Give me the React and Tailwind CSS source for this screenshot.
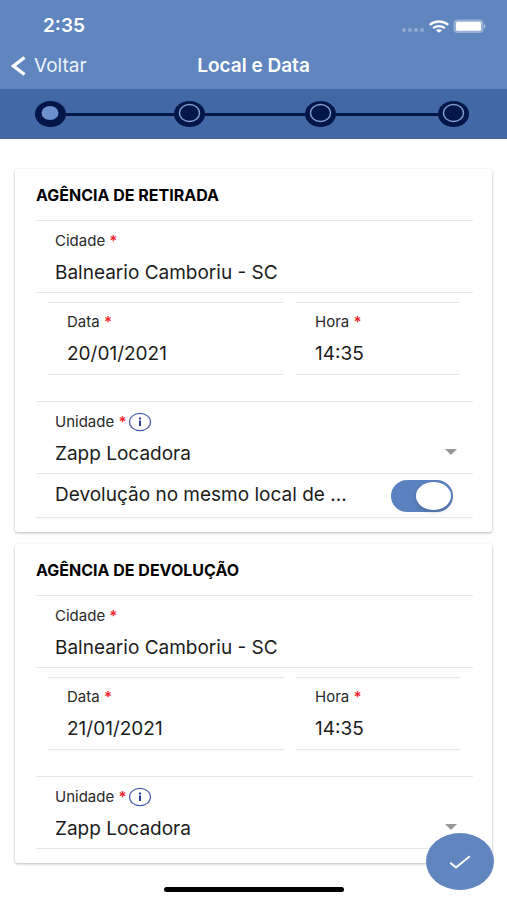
import { useState } from "react";

function StatusBar() {
  return (
    <div className="flex h-[52px] items-center justify-between pl-[43px] pr-[21px]">
      <span className="text-[19px] font-semibold">2:35</span>
      <div className="flex items-center">
        <svg width="24" height="6" viewBox="0 0 24 6" className="mt-2" aria-hidden="true">
          <g fill="#fff" opacity="0.3">
            <circle cx="3" cy="3" r="2" />
            <circle cx="9" cy="3" r="2" />
            <circle cx="15" cy="3" r="2" />
            <circle cx="21" cy="3" r="2" />
          </g>
        </svg>
        <svg width="20" height="13" viewBox="0 0 20 13" className="ml-1" aria-hidden="true">
          <g fill="none" stroke="#fff" strokeWidth="2.4">
            <path d="M.8 4.800C6 .4 14 .4 19.200 4.800" />
            <path d="M4.200 8.200c3.300-2.800 8.300-2.800 11.600 0" />
          </g>
          <path d="M6.800 10.200c1.900-1.400 4.500-1.400 6.400 0L10 12.800z" fill="#fff" />
        </svg>
        <svg width="33" height="15" viewBox="0 0 33 15" className="ml-1" aria-hidden="true">
          <rect x="0.500" y="0.500" width="30" height="13.500" rx="4" fill="#fff" opacity="0.35" />
          <rect x="3" y="2.800" width="25" height="8.900" rx="1.500" fill="#fff" />
          <path d="M31 5c2 .8 2 3.700 0 4.500z" fill="#fff" opacity="0.5" />
        </svg>
      </div>
    </div>
  );
}

function StepDot({ current }) {
  return (
    <svg width="31" height="26" viewBox="0 0 31 26" className="shrink-0" aria-hidden="true">
      <ellipse cx="15.5" cy="13" rx="15.5" ry="13" fill="#02164a" />
      {current ? (
        <ellipse cx="15" cy="12" rx="8.500" ry="7" fill="#6c8fce" />
      ) : (
        <ellipse cx="15.500" cy="12" rx="10" ry="8.500" fill="none" stroke="#7f9bd0" strokeWidth="1.400" />
      )}
    </svg>
  );
}

function Stepper() {
  return (
    <div className="flex h-[50px] items-center bg-[#4268a5] pl-[35px] pr-[38px]">
      <StepDot current />
      <div className="h-[3px] grow-[108] bg-[#02164a]" />
      <StepDot />
      <div className="h-[3px] grow-[100] bg-[#02164a]" />
      <StepDot />
      <div className="h-[3px] grow-[102] bg-[#02164a]" />
      <StepDot />
    </div>
  );
}

function Label({ htmlFor, children }) {
  return (
    <label htmlFor={htmlFor} className="block text-[15px] leading-5 text-[#2a2a2a]">
      {children} <span className="font-semibold text-[#f5222d]">*</span>
    </label>
  );
}

function Field({ id, label, value }) {
  return (
    <>
      <Label htmlFor={id}>{label}</Label>
      <input
        id={id}
        type="text"
        defaultValue={value}
        className="mt-2 block h-7 w-full bg-transparent text-[19px] text-[#1c1c1c] outline-none"
      />
    </>
  );
}

function UnitField({ id }) {
  return (
    <div className="border-y border-[#e6e6e6] pt-[10px] pb-[5px] pl-[19px] pr-[16px]">
      <div className="flex h-5 items-center">
        <Label htmlFor={id}>Unidade</Label>
        <button type="button" aria-label="Informações da unidade" className="ml-px">
          <svg width="24" height="20" viewBox="0 0 24 20" aria-hidden="true">
            <ellipse cx="12" cy="10" rx="10.500" ry="8.700" fill="none" stroke="#4a5ca8" strokeWidth="1.200" />
            <rect x="11" y="5.500" width="2" height="2" fill="#2c3d8f" />
            <rect x="11" y="8.500" width="2" height="5.500" fill="#2c3d8f" />
          </svg>
        </button>
      </div>
      <div className="mt-2 flex h-7 items-center">
        <select
          id={id}
          className="h-7 grow appearance-none bg-transparent text-[19px] text-[#1c1c1c] outline-none"
        >
          <option>Zapp Locadora</option>
        </select>
        <svg width="12" height="6" viewBox="0 0 12 6" className="mb-1 shrink-0" aria-hidden="true">
          <path d="M0 0h12L6 6z" fill="#979797" />
        </svg>
      </div>
    </div>
  );
}

function Agency({ prefix, title, city, date, time, children }) {
  return (
    <section className="rounded-[3px] bg-white pt-[14px] pb-[14px] pl-[21px] pr-[19px] shadow-[0_1px_3px_rgba(0,0,0,0.28)]">
      <h2 className="border-b border-[#e6e6e6] pb-[13px] text-[16px] leading-6 font-bold text-black">
        {title}
      </h2>
      <div className="border-b border-[#e6e6e6] pt-[10px] pb-[5px] pl-[19px]">
        <Field id={prefix + "-cidade"} label="Cidade" value={city} />
      </div>
      <div className="mt-[9px] mb-[26px] ml-3 mr-[13px] grid grid-cols-[236fr_164fr] gap-3">
        <div className="min-w-0 border-y border-[#e6e6e6] pt-[9px] pb-[6px] pl-[19px]">
          <Field id={prefix + "-data"} label="Data" value={date} />
        </div>
        <div className="min-w-0 border-y border-[#e6e6e6] pt-[9px] pb-[6px] pl-[19px]">
          <Field id={prefix + "-hora"} label="Hora" value={time} />
        </div>
      </div>
      <UnitField id={prefix + "-unidade"} />
      {children}
    </section>
  );
}

function SameLocationSwitch() {
  const [on, setOn] = useState(true);
  return (
    <div className="flex h-11 items-center justify-between border-b border-[#e6e6e6] pl-[19px] pr-5">
      <label htmlFor="mesmo-local" className="min-w-0 truncate text-[19px] text-[#1c1c1c]">
        Devolução no mesmo local de ...
      </label>
      <input
        id="mesmo-local"
        type="checkbox"
        role="switch"
        checked={on}
        onChange={(e) => setOn(e.target.checked)}
        className="flex h-8 w-[62px] shrink-0 appearance-none items-center rounded-full bg-[#c4c4c4] px-[2px] before:block before:h-7 before:w-[35px] before:rounded-[50%] before:bg-white before:shadow-[0_2px_5px_rgba(0,0,0,0.2)] checked:justify-end checked:bg-[#5b82c0]"
      />
    </div>
  );
}

export default function App() {
  return (
    <div className="flex min-h-screen flex-col bg-white font-['Inter','Liberation_Sans',sans-serif]">
      <header className="bg-[#6085bf] text-white">
        <StatusBar />
        <div className="grid h-[37px] grid-cols-[1fr_auto_1fr] items-start">
          <button type="button" className="flex h-7 items-center gap-2 pl-[11px] text-[19px] text-[#eef3fc]">
            <svg width="15" height="20" viewBox="0 0 15 20" aria-hidden="true">
              <path d="M13.500 1.500 2.500 10l11 8.500" fill="none" stroke="#fff" strokeWidth="3.400" />
            </svg>
            Voltar
          </button>
          <h1 className="text-[19px] leading-7 font-semibold">Local e Data</h1>
        </div>
        <Stepper />
      </header>
      <main className="flex flex-col gap-3 pt-[30px] pr-[15px] pl-[15px]">
        <Agency
          prefix="retirada"
          title="AGÊNCIA DE RETIRADA"
          city="Balneario Camboriu - SC"
          date="20/01/2021"
          time="14:35"
        >
          <SameLocationSwitch />
        </Agency>
        <Agency
          prefix="devolucao"
          title="AGÊNCIA DE DEVOLUÇÃO"
          city="Balneario Camboriu - SC"
          date="21/01/2021"
          time="14:35"
        />
      </main>
      <footer className="mt-auto flex justify-center pb-2">
        <div className="h-[5px] w-[180px] rounded-full bg-black" />
      </footer>
      <button
        type="button"
        aria-label="Confirmar"
        className="fixed right-[13px] bottom-[10px] flex h-[57px] w-[68px] items-center justify-center rounded-[50%] bg-[#6085bf]"
      >
        <svg width="22" height="14" viewBox="0 0 22 14" aria-hidden="true">
          <path d="M1.200 7.800 7 12.500 20.800 1.200" fill="none" stroke="#fff" strokeWidth="2" />
        </svg>
      </button>
    </div>
  );
}
